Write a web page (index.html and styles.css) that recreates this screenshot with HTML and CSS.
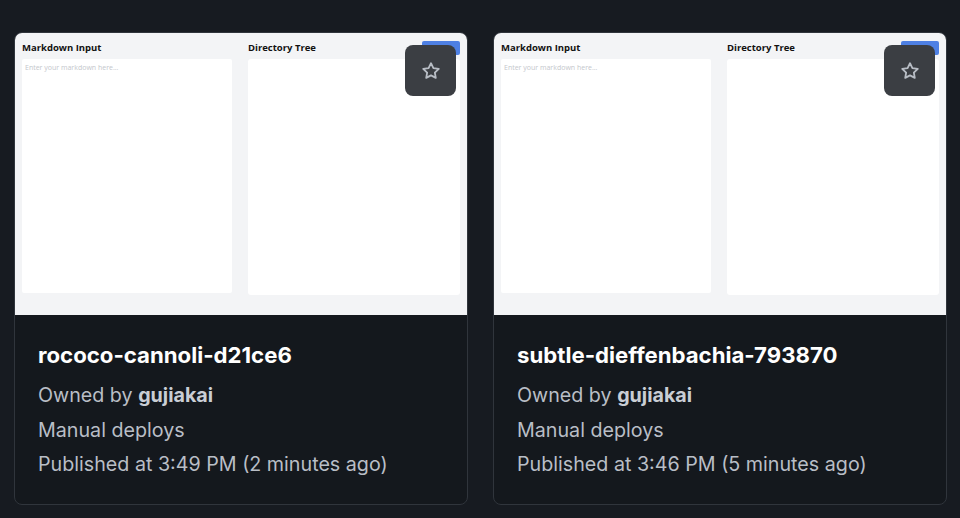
FILE: index.html
```html
<!DOCTYPE html>
<html lang="en">
<head>
  <meta charset="UTF-8">
  <title>Sites</title>
  <link rel="stylesheet" href="styles.css">
</head>
<body>
  <div class="grid">
    <div class="card">
      <div class="preview">
        <div class="pane">
          <div class="label">Markdown Input</div>
          <div class="input">Enter your markdown here...</div>
        </div>
        <div class="pane">
          <div class="label">Directory Tree</div>
          <div class="tree"></div>
        </div>
        <span class="blue"></span>
        <button class="star">
          <svg viewBox="0 0 24 24" width="22" height="22"><path d="M12 3.5l2.6 5.3 5.9.8-4.3 4.1 1 5.8L12 16.8l-5.2 2.7 1-5.8-4.3-4.1 5.9-.8z" fill="none" stroke="#b7bcc4" stroke-width="2" stroke-linejoin="round"/></svg>
        </button>
      </div>
      <div class="info">
        <h2>rococo-cannoli-d21ce6</h2>
        <p>Owned by <b>gujiakai</b></p>
        <p>Manual deploys</p>
        <p>Published at 3:49 PM (2 minutes ago)</p>
      </div>
    </div>

    <div class="card">
      <div class="preview">
        <div class="pane">
          <div class="label">Markdown Input</div>
          <div class="input">Enter your markdown here...</div>
        </div>
        <div class="pane">
          <div class="label">Directory Tree</div>
          <div class="tree"></div>
        </div>
        <span class="blue"></span>
        <button class="star">
          <svg viewBox="0 0 24 24" width="22" height="22"><path d="M12 3.5l2.6 5.3 5.9.8-4.3 4.1 1 5.8L12 16.8l-5.2 2.7 1-5.8-4.3-4.1 5.9-.8z" fill="none" stroke="#b7bcc4" stroke-width="2" stroke-linejoin="round"/></svg>
        </button>
      </div>
      <div class="info">
        <h2>subtle-dieffenbachia-793870</h2>
        <p>Owned by <b>gujiakai</b></p>
        <p>Manual deploys</p>
        <p>Published at 3:46 PM (5 minutes ago)</p>
      </div>
    </div>
  </div>
</body>
</html>
```

FILE: styles.css
```css
body {
  margin: 0;
  background: #171b21;
  font-family: Inter, "Liberation Sans", Arial, sans-serif;
}

.grid {
  display: grid;
  grid-template-columns: 454px 454px;
  gap: 25px;
  padding: 32px 0 0 14px;
}

.card {
  background: #14181d;
  border: 1px solid #30353c;
  border-radius: 8px;
  overflow: hidden;
  height: 473px;
  box-sizing: border-box;
}

.preview {
  position: relative;
  height: 282px;
  background: #f3f4f6;
  display: grid;
  grid-template-columns: 210px 212px;
  gap: 16px;
  padding: 8px 0 0 7px;
  box-sizing: border-box;
}

.label {
  font-family: "Open Sans", sans-serif;
  font-weight: 700;
  font-size: 9.5px;
  color: #111;
  height: 18px;
  line-height: 14px;
}

.input {
  background: #fff;
  height: 234px;
  border-radius: 2px;
  font-family: "Open Sans", sans-serif;
  font-size: 7px;
  color: #c4c7cc;
  padding: 4px 3px;
  box-sizing: border-box;
}

.tree {
  background: #fff;
  height: 236px;
  border-radius: 3px;
}

.blue {
  position: absolute;
  top: 8px;
  right: 7px;
  width: 38px;
  height: 14px;
  background: #4e80e4;
  border-radius: 2px;
}

.star {
  position: absolute;
  top: 12px;
  right: 11px;
  width: 51px;
  height: 51px;
  border: none;
  border-radius: 8px;
  background: #3b3e43;
  display: flex;
  align-items: center;
  justify-content: center;
  padding: 0;
}

.info {
  padding: 26px 23px;
}

.info h2 {
  margin: 0 0 9px;
  font-size: 22.2px;
  font-weight: 700;
  color: #ffffff;
  line-height: 28px;
}

.info p {
  margin: 0;
  font-size: 19.7px;
  line-height: 34.5px;
  color: #b9bec6;
}

.info b {
  color: #c9ced5;
  font-weight: 700;
}
```
